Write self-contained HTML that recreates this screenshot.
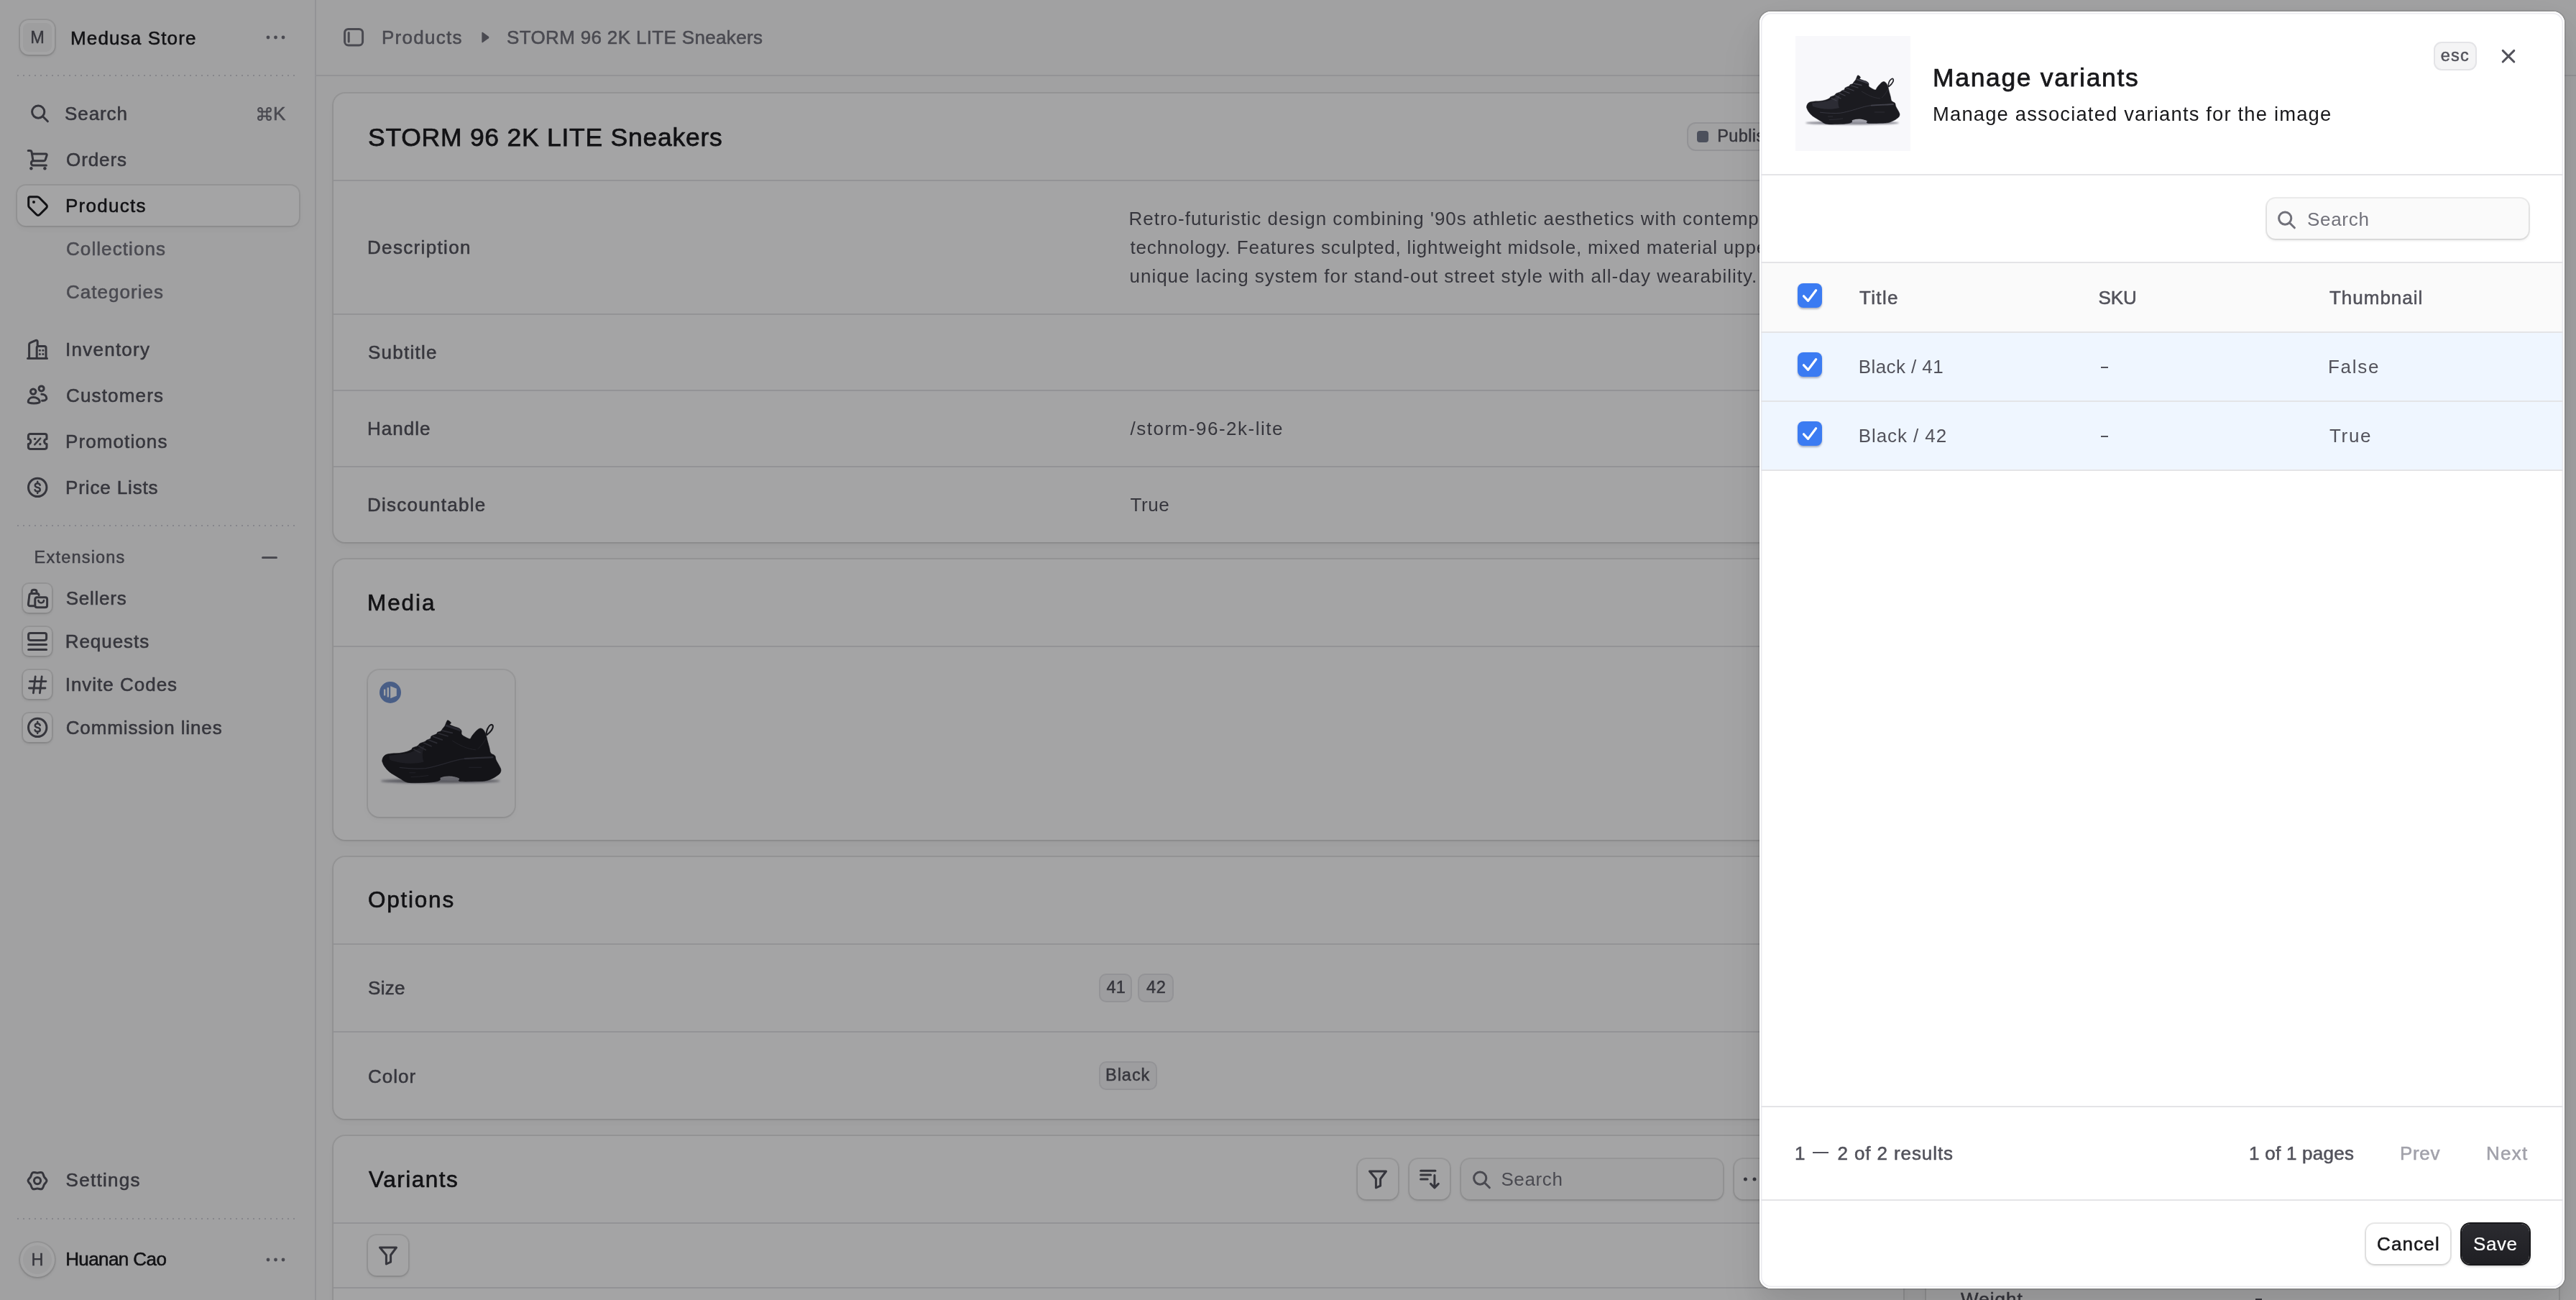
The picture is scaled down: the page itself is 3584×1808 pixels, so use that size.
<!DOCTYPE html>
<html><head><meta charset="utf-8"><title>Medusa Admin</title>
<style>
*{box-sizing:border-box;margin:0;padding:0}
html,body{width:3584px;height:1808px;overflow:hidden;background:#FAFAFA;font-family:"Liberation Sans",sans-serif}
#page{will-change:transform;position:absolute;left:0;top:0;width:3584px;height:1808px;overflow:hidden;background:#FAFAFA}
.t{position:absolute;white-space:pre;line-height:1;font-weight:400}
.abs{position:absolute}
.ic{position:absolute;overflow:visible;fill:none;stroke-linecap:round;stroke-linejoin:round}
.hl{position:absolute;height:2px;background:#E4E4E7}
.card{position:absolute;background:#fff;border-radius:16px;box-shadow:0 0 0 2px rgba(0,0,0,.08),0 2px 4px -2px rgba(0,0,0,.08),0 4px 8px 0 rgba(0,0,0,.04)}
.dots{position:absolute;height:2px;background:repeating-linear-gradient(90deg,#D0D0D6 0 2px,transparent 2px 8px)}
.xbox{position:absolute;width:40px;height:40px;border-radius:8px;background:#fff;box-shadow:0 0 0 2px rgba(0,0,0,.08),0 2px 4px rgba(0,0,0,.12)}
.btn{position:absolute;width:56px;height:56px;border-radius:12px;background:#fff;box-shadow:0 0 0 2px rgba(0,0,0,.08),0 2px 4px rgba(0,0,0,.12)}
.inp{position:absolute;height:56px;border-radius:12px;background:#FAFAFA;box-shadow:0 0 0 2px rgba(0,0,0,.08),0 2px 4px rgba(0,0,0,.12)}
.badge{position:absolute;height:40px;border-radius:10px;background:#F4F4F5;border:2px solid #E4E4E7}
#overlay{position:absolute;left:0;top:0;width:3584px;height:1808px;background:rgba(9,9,11,.37)}
#drawer{position:absolute;left:2448px;top:16px;width:1120px;height:1776px;background:#fff;border-radius:16px;border:2px solid #fff;
 box-shadow:0 0 0 2px rgba(0,0,0,.08),0 16px 32px rgba(0,0,0,.07),0 32px 64px rgba(0,0,0,.07);overflow:hidden}
#dt{will-change:transform;position:absolute;left:-2450px;top:-18px;width:3584px;height:1808px}
.cb{position:absolute;width:34px;height:34px;border-radius:8px;background:#3B7BF2;box-shadow:0 1.5px 2.5px rgba(20,30,70,.32)}
#dring{position:absolute;left:2448px;top:16px;width:1120px;height:1776px;border-radius:16px;box-shadow:inset 0 0 0 2px #fff,inset 0 0 0 3.5px rgba(228,228,235,.75);pointer-events:none}
</style></head>
<body>
<svg width="0" height="0" style="position:absolute">
 <defs>
  <filter id="blur1" x="-20%" y="-200%" width="140%" height="500%"><feGaussianBlur stdDeviation="1.1"/></filter>
  <symbol id="shoe" viewBox="0 0 160 160">
   <ellipse cx="79" cy="121" rx="65" ry="2.4" fill="#3a3a48" opacity=".6" filter="url(#blur1)"/>
   <path fill="#1b1b20" stroke="#1b1b20" stroke-width=".5" stroke-linejoin="round" d="M15.6,97.9 C15.8,96.8 16.1,95.7 16.9,94.6 C17.7,93.5 18.5,92.6 20.2,92.0 C21.9,91.4 23.7,91.3 26.2,91.0 C28.7,90.7 31.3,91.0 34.2,90.6 C37.1,90.2 39.7,89.7 42.1,89.0 C44.5,88.3 46.2,87.4 47.4,86.6 C48.6,85.8 47.6,85.4 48.8,84.7 C50.0,84.0 52.7,83.5 54.1,82.7 C55.5,81.9 55.3,80.8 56.7,80.0 C58.1,79.2 60.7,78.6 62.0,78.0 C63.3,77.4 62.9,77.0 64.0,76.4 C65.1,75.8 67.0,75.5 68.0,74.7 C69.0,73.9 68.1,72.9 69.3,72.0 C70.5,71.1 73.4,70.5 74.6,69.7 C75.8,68.9 75.2,68.2 76.0,67.7 C76.8,67.2 78.3,67.3 79.3,66.7 C80.3,66.1 80.5,65.2 81.3,64.1 C82.1,63.0 83.1,62.2 83.9,60.8 C84.7,59.4 85.3,57.2 85.9,56.1 C86.5,55.0 86.5,54.6 87.3,54.8 C88.1,55.0 90.2,56.6 90.6,57.4 C91.0,58.2 88.6,58.6 89.3,59.4 C90.0,60.2 92.8,61.1 94.6,61.8 C96.4,62.5 97.9,62.6 99.2,63.4 C100.5,64.2 101.4,64.9 101.9,66.1 C102.4,67.3 101.5,68.8 102.2,70.0 C102.9,71.2 104.4,71.9 105.8,72.7 C107.2,73.5 108.7,74.3 109.8,74.7 C110.9,75.1 111.1,75.3 111.8,74.7 C112.5,74.1 112.7,72.8 113.8,71.4 C114.9,70.0 116.4,68.1 117.8,66.7 C119.2,65.3 120.5,64.1 121.8,63.7 C123.1,63.3 124.0,63.6 125.1,64.4 C126.2,65.2 127.0,66.6 127.7,68.0 C128.4,69.4 128.6,70.3 129.1,72.0 C129.6,73.7 129.8,75.1 130.4,77.4 C131.0,79.7 131.8,82.3 132.4,84.7 C133.0,87.1 132.9,89.1 134.0,90.6 C135.1,92.1 137.4,92.0 138.4,93.3 C139.4,94.6 138.9,96.0 139.7,97.9 C140.5,99.8 142.0,102.0 143.0,103.9 C144.0,105.8 144.8,107.1 145.0,108.5 C145.2,109.9 144.9,110.8 144.3,111.9 C143.7,113.0 143.1,113.4 141.7,114.5 C140.3,115.6 138.7,116.7 136.4,117.8 C134.1,118.9 132.2,119.9 129.1,120.5 C126.0,121.1 124.2,121.1 119.1,121.2 C114.0,121.3 104.1,121.8 100.5,121.2 C96.9,120.6 101.3,118.8 99.2,117.8 C97.1,116.8 92.2,115.6 88.6,115.5 C85.0,115.4 81.1,116.4 79.3,117.2 C77.5,118.0 79.8,119.0 78.6,119.8 C77.4,120.6 76.2,121.3 72.7,121.8 C69.2,122.3 64.7,122.7 59.4,122.8 C54.1,122.9 47.7,123.3 43.4,122.5 C39.1,121.7 38.1,119.9 35.5,118.5 C32.9,117.1 31.1,115.9 28.8,114.5 C26.5,113.1 24.8,112.2 22.9,110.5 C21.0,108.8 19.5,107.0 18.2,105.2 C16.9,103.4 16.4,101.9 15.9,100.6 C15.4,99.3 15.4,99.0 15.6,97.9Z"/>
   <path fill="#9a9aa4" opacity=".9" d="M79.5,117.3 C84,115.7 94,115.7 99,117.9 L99.6,119.6 C93,120.6 85,120.6 79,119.9Z"/>
   <path fill="none" stroke="#26262c" stroke-width="1.7" stroke-linecap="round" d="M129.1,70 C129.3,66 131,61.2 133.8,59.7 C135.9,58.7 136.9,60.8 135.9,63.4 C134.8,66.2 132,68.8 129.6,70.6"/>
   <path fill="#33333b" d="M23,93.5 C30,92 40,91.6 46,90 C52,88 57,84 62,82 C60,87 58,93 61,100 C50,103 35,102 24,98Z" opacity=".75"/>
   <path fill="none" stroke="#3c3c46" stroke-width="2.2" stroke-linecap="round" d="M85.5,60.5 C90,62 96,63.6 100.5,65.6"/>
   <path fill="none" stroke="#41414b" stroke-width="1.3" stroke-linecap="round" d="M50,86.5 L57,90 M55.5,83 L63,87 M61,79.5 L69,83 M66,76 L75,79.5 M71,72.5 L81,76 M77,69 L87,72 M81,66 L92,68.5"/>
   <path fill="none" stroke="#3a3a44" stroke-width=".9" d="M34.2,106.2 C45,107.6 55,107.8 62.7,107.2 C75,105 85,101.5 92.6,99.3 C98,97.8 102,97 105.8,96.6"/>
   <path fill="none" stroke="#42424c" stroke-width="1.8" stroke-linecap="round" d="M105.8,96.6 C116,95.6 127,95.6 136,95"/>
   <path fill="none" stroke="#32323a" stroke-width=".8" d="M46.8,116.5 C54,116.4 60,115.8 66,114.9 M45,112 H52 M110,106 H124"/>
   <path fill="none" stroke="#34343c" stroke-width=".7" d="M92,77 C100,82 108,86 118,87 M120,86 C124,82 127,78 129,74"/>
  </symbol>
  <symbol id="dollar" viewBox="0 0 32 32">
   <circle cx="16.2" cy="15.9" r="12.7" stroke-width="3" fill="none"/>
   <path fill="none" stroke-width="2.5" d="M19.7,12.7 C19.2,11.1 17.9,10.2 16.2,10.2 C14.2,10.2 12.8,11.3 12.8,13 C12.8,14.6 14,15.4 16.2,15.9 C18.6,16.4 19.8,17.3 19.8,18.9 C19.8,20.5 18.3,21.6 16.2,21.6 C14.3,21.6 13,20.7 12.6,19.2 M16.2,7.8 V10.2 M16.2,21.6 V24"/>
  </symbol>
  <symbol id="funnel" viewBox="0 0 56 56">
   <path fill="none" stroke-width="3" d="M16.5,17 H39.5 L31.6,27.5 V37.2 L25.4,40 V27.5 Z"/>
  </symbol>
  <symbol id="mag" viewBox="0 0 32 32">
   <circle cx="14.2" cy="13.6" r="8.6" stroke-width="3" fill="none"/>
   <path stroke-width="3" d="M20.6,20 L27.4,26.8" fill="none"/>
  </symbol>
  <symbol id="check" viewBox="0 0 34 34">
   <path fill="none" stroke="#fff" stroke-width="3.2" stroke-linecap="round" stroke-linejoin="round" d="M8.5,17.8 L14.6,24.4 L25.6,9.8"/>
  </symbol>
 </defs>
</svg>

<div id="page">
<!-- ================= SIDEBAR ================= -->
<div class="abs" style="left:438px;top:0;width:2px;height:1808px;background:#E4E4E7"></div>
<!-- store avatar -->
<div class="abs" style="left:28px;top:28px;width:48px;height:48px;border-radius:12px;background:#fff;box-shadow:0 0 0 2px rgba(0,0,0,.08),0 2px 4px rgba(0,0,0,.12)"></div>
<div class="abs" style="left:32px;top:32px;width:40px;height:40px;border-radius:8px;background:#F5F5F6"></div>
<span class="t" style="left:42.2px;top:40.8px;font-size:23.5px;color:#52525B;-webkit-text-stroke:.4px #52525B">M</span>
<svg class="ic" style="left:366px;top:44px" width="36" height="16"><circle cx="7" cy="8" r="2.4" fill="#71717A"/><circle cx="17.5" cy="8" r="2.4" fill="#71717A"/><circle cx="28" cy="8" r="2.4" fill="#71717A"/></svg>
<div class="dots" style="left:24px;top:104px;width:392px"></div>
<!-- search -->
<svg class="ic" style="left:38.7px;top:142.1px" width="32" height="32" stroke="#52525B"><use href="#mag"/></svg>
<svg class="ic" style="left:358px;top:148.8px" width="20" height="19" viewBox="0 0 18 18" preserveAspectRatio="none" stroke="#71717A" stroke-width="2"><path d="M6,6 H12 V12 H6 Z M6,6 V4 A2.5,2.5 0 1 0 3.5,6 H6 M12,6 H14.5 A2.5,2.5 0 1 0 12,3.5 V6 M12,12 V14.5 A2.5,2.5 0 1 0 14.5,12 H12 M6,12 H3.5 A2.5,2.5 0 1 0 6,14.5 V12"/></svg>
<!-- orders cart -->
<svg class="ic" style="left:36px;top:206px" width="32" height="32" stroke="#52525B" stroke-width="3"><path d="M3.2,3.6 H5.6 C6.9,3.6 7.9,4.4 8.1,5.7 L10,17.6"/><path d="M8.8,8 H27.6 C28.8,8 29.5,9 29.1,10.1 L27,16.4 C26.7,17.3 26,17.7 25,17.7 H10.2 C6.6,17.7 6.4,24 10.2,24 H28.4"/><circle cx="7.4" cy="28.3" r="2.2" fill="#52525B" stroke="none"/><circle cx="26.4" cy="28.3" r="2.2" fill="#52525B" stroke="none"/></svg>
<!-- products active -->
<div class="abs" style="left:24px;top:258px;width:392px;height:56px;border-radius:12px;background:#fff;box-shadow:0 0 0 2px rgba(0,0,0,.08),0 2px 4px -2px rgba(0,0,0,.08),0 4px 8px rgba(0,0,0,.04)"></div>
<svg class="ic" style="left:36px;top:270px" width="32" height="32" stroke="#18181B" stroke-width="3"><path d="M5.8,3.7 H15.8 C16.9,3.7 17.8,4.1 18.5,4.8 L28.3,14.6 C29.8,16.1 29.8,17.9 28.3,19.4 L19.4,28.3 C17.9,29.8 16.1,29.8 14.6,28.3 L4.8,18.5 C4.1,17.8 3.7,16.9 3.7,15.8 V5.8 C3.7,4.6 4.6,3.7 5.8,3.7 Z"/><circle cx="11" cy="11" r="2" fill="#18181B" stroke="none"/></svg>
<!-- inventory -->
<svg class="ic" style="left:36px;top:470px" width="32" height="32" stroke="#52525B" stroke-width="3"><path d="M2.5,28.6 H29.5"/><path d="M4.6,28 V9 C4.6,7.8 5.2,7 6.3,6.6 L13.8,3.4 C15,2.9 16.2,3.6 16.2,4.9 V10.2"/><path d="M15.2,28 V13.6 C15.2,12.3 16.1,11.4 17.4,11.4 H25.8 C27.1,11.4 28,12.3 28,13.6 V28"/><g fill="#52525B" stroke="none"><circle cx="19.4" cy="17.2" r="1.5"/><circle cx="23.9" cy="17.2" r="1.5"/><circle cx="19.4" cy="22.6" r="1.5"/><circle cx="23.9" cy="22.6" r="1.5"/></g></svg>
<!-- customers -->
<svg class="ic" style="left:36px;top:534px" width="32" height="32" stroke="#52525B" stroke-width="3"><circle cx="10.2" cy="10.6" r="3.7"/><path d="M3.2,25 C3.2,21 6.4,18.6 10.4,18.6 C14.4,18.6 19.2,21 19.2,25 C19.2,27.6 3.2,27.6 3.2,25 Z"/><circle cx="21.6" cy="6.4" r="3.5"/><path d="M21.8,14.2 C26,14.2 28.8,16.8 28.8,20.2 C28.8,22.4 25.6,23.6 22.6,23.2"/></svg>
<!-- promotions -->
<svg class="ic" style="left:36px;top:598px" width="32" height="32" stroke="#52525B" stroke-width="3"><path d="M6,5.6 H26.4 C28,5.6 29,6.6 29,8.2 V12.4 C27,12.4 25.6,14 25.6,16 C25.6,18 27,19.6 29,19.6 V23.8 C29,25.4 28,26.4 26.4,26.4 H6 C4.4,26.4 3.4,25.4 3.4,23.8 V19.6 C5.4,19.6 6.8,18 6.8,16 C6.8,14 5.4,12.4 3.4,12.4 V8.2 C3.4,6.6 4.4,5.6 6,5.6 Z"/><path d="M20.2,11.6 L12.2,20.4" stroke-width="2.6"/><circle cx="12.6" cy="12.4" r="1.7" fill="#52525B" stroke="none"/><circle cx="19.8" cy="19.8" r="1.7" fill="#52525B" stroke="none"/></svg>
<!-- price lists -->
<svg class="ic" style="left:36px;top:662px" width="32" height="32" stroke="#52525B"><use href="#dollar"/></svg>
<div class="dots" style="left:24px;top:730px;width:392px"></div>
<!-- extensions -->
<div class="abs" style="left:363.5px;top:774.3px;width:22.5px;height:3px;border-radius:2px;background:#71717A"></div>
<div class="xbox" style="left:32px;top:812px"></div>
<svg class="ic" style="left:36px;top:816px" width="32" height="32" stroke="#52525B" stroke-width="3"><path d="M11,26.8 H5.8 C4.2,26.8 3.2,25.6 3.4,24 L4.9,11.6 C5.1,10.2 6,9.4 7.4,9.4 H15.6 C17,9.4 17.9,10.2 18.1,11.6"/><path d="M8,9.2 V7 C8,3.4 15,3.4 15,7 V9.2"/><path d="M15.6,14.8 H26.8 C28.6,14.8 29.6,15.8 29.6,17.6 V26 C29.6,27.8 28.6,28.8 26.8,28.8 H15.6 C13.8,28.8 12.8,27.8 12.8,26 V17.6 C12.8,15.8 13.8,14.8 15.6,14.8 Z"/><path d="M17.4,19 C17.4,23.6 25,23.6 25,19" stroke-width="2.6"/></svg>
<div class="xbox" style="left:32px;top:872px"></div>
<svg class="ic" style="left:36px;top:876px" width="32" height="32" stroke="#52525B" stroke-width="3"><path d="M6.2,4.6 H26 C27.6,4.6 28.6,5.6 28.6,7.2 V11.8 C28.6,13.4 27.6,14.4 26,14.4 H6.2 C4.6,14.4 3.6,13.4 3.6,11.8 V7.2 C3.6,5.6 4.6,4.6 6.2,4.6 Z"/><path d="M3.6,20.4 H28.6 M3.6,27.4 H28.6"/></svg>
<div class="xbox" style="left:32px;top:932px"></div>
<svg class="ic" style="left:36px;top:936px" width="32" height="32" stroke="#52525B" stroke-width="2.8"><path d="M13.2,4.8 L10.4,27.8 M22.2,4.8 L19.4,27.8 M5.4,11.6 H28 M4.4,21 H27"/></svg>
<div class="xbox" style="left:32px;top:992px"></div>
<svg class="ic" style="left:36px;top:996px" width="32" height="32" stroke="#52525B"><use href="#dollar"/></svg>
<!-- settings -->
<svg class="ic" style="left:36px;top:1626px" width="32" height="32" stroke="#52525B" stroke-width="3"><path d="M29.00,16.10 C29.00,18.28 26.74,19.30 25.44,21.55 C24.14,23.80 24.39,26.27 22.50,27.36 C20.61,28.45 18.60,27.00 16.00,27.00 C13.40,27.00 11.39,28.45 9.50,27.36 C7.61,26.27 7.86,23.80 6.56,21.55 C5.26,19.30 3.00,18.28 3.00,16.10 C3.00,13.92 5.26,12.90 6.56,10.65 C7.86,8.40 7.61,5.93 9.50,4.84 C11.39,3.75 13.40,5.20 16.00,5.20 C18.60,5.20 20.61,3.75 22.50,4.84 C24.39,5.93 24.14,8.40 25.44,10.65 C26.74,12.90 29.00,13.92 29.00,16.10Z"/><circle cx="16" cy="16.1" r="4.6"/></svg>
<div class="dots" style="left:24px;top:1694px;width:392px"></div>
<!-- user -->
<div class="abs" style="left:28px;top:1728px;width:48px;height:48px;border-radius:24px;background:#fff;box-shadow:0 0 0 2px rgba(0,0,0,.08),0 2px 4px rgba(0,0,0,.12)"></div>
<div class="abs" style="left:32px;top:1732px;width:40px;height:40px;border-radius:20px;background:#F5F5F6"></div>
<span class="t" style="left:43.6px;top:1741.4px;font-size:23.5px;color:#52525B;-webkit-text-stroke:.4px #52525B">H</span>
<svg class="ic" style="left:366px;top:1744px" width="36" height="16"><circle cx="7" cy="8" r="2.4" fill="#71717A"/><circle cx="17.5" cy="8" r="2.4" fill="#71717A"/><circle cx="28" cy="8" r="2.4" fill="#71717A"/></svg>

<!-- ================= TOPBAR ================= -->
<div class="hl" style="left:440px;top:104px;width:3144px"></div>
<svg class="ic" style="left:476px;top:36px" width="32" height="32" stroke="#71717A" stroke-width="3"><rect x="3.6" y="4.4" width="25" height="22.6" rx="5"/><path d="M9.2,9.6 V22"/></svg>
<svg class="ic" style="left:668px;top:43px" width="16" height="18"><path d="M2.4,2.6 C2.4,1.8 3.2,1.4 3.9,1.9 L11.8,7.8 C12.6,8.4 12.6,9.6 11.8,10.2 L3.9,16.1 C3.2,16.6 2.4,16.2 2.4,15.4 Z" fill="#71717A"/></svg>
<!-- ================= GENERAL CARD ================= -->
<div class="card" style="left:464px;top:130px;width:2184px;height:624px"></div>
<div class="hl" style="left:464px;top:250px;width:2184px"></div>
<div class="hl" style="left:464px;top:436px;width:2184px"></div>
<div class="hl" style="left:464px;top:542px;width:2184px"></div>
<div class="hl" style="left:464px;top:648px;width:2184px"></div>
<!-- published badge -->
<div class="abs" style="left:2347px;top:170px;width:170px;height:40px;border-radius:12px;background:#FAFAFA;border:2px solid #E4E4E7"></div>
<div class="abs" style="left:2361px;top:182px;width:16px;height:16px;border-radius:4px;background:#747A8C"></div>
<div class="btn" style="left:2544px;top:162px;background:transparent;box-shadow:none"></div>
<!-- ================= MEDIA CARD ================= -->
<div class="card" style="left:464px;top:778px;width:2184px;height:390px"></div>
<div class="hl" style="left:464px;top:898px;width:2184px"></div>
<div class="abs" style="left:512px;top:932px;width:204px;height:204px;border-radius:16px;background:#FDFDFE;box-shadow:0 0 0 2px rgba(0,0,0,.08),0 2px 4px -2px rgba(0,0,0,.08),0 4px 8px rgba(0,0,0,.04);overflow:hidden">
 <svg class="abs" style="left:0;top:0" width="204" height="204"><use href="#shoe"/></svg>
</div>
<svg class="ic" style="left:528px;top:948px" width="30" height="30"><circle cx="15" cy="15" r="15" fill="#6F90CF"/><path d="M15.2,6.2 L23.8,9.7 V19.8 L15.2,23.3 Z" fill="#fff"/><rect x="10.6" y="8.3" width="2.5" height="13.2" fill="#fff"/><rect x="6" y="10.6" width="2.3" height="8.8" fill="#fff"/></svg>
<!-- ================= OPTIONS CARD ================= -->
<div class="card" style="left:464px;top:1192px;width:2184px;height:364px"></div>
<div class="hl" style="left:464px;top:1312px;width:2184px"></div>
<div class="hl" style="left:464px;top:1434px;width:2184px"></div>
<div class="badge" style="left:1528.6px;top:1354px;width:46px"></div>
<div class="badge" style="left:1583.4px;top:1354px;width:49.4px"></div>
<div class="badge" style="left:1528.6px;top:1476px;width:81px"></div>
<!-- ================= VARIANTS CARD ================= -->
<div class="card" style="left:464px;top:1580px;width:2184px;height:400px"></div>
<div class="hl" style="left:464px;top:1700px;width:2184px"></div>
<div class="hl" style="left:464px;top:1790px;width:2184px"></div>
<div class="btn" style="left:1889px;top:1612px"></div>
<svg class="ic" style="left:1889px;top:1612px" width="56" height="56" stroke="#52525B"><use href="#funnel"/></svg>
<div class="btn" style="left:1961px;top:1612px"></div>
<svg class="ic" style="left:1961px;top:1612px" width="56" height="56" stroke="#52525B" stroke-width="3"><path d="M15.6,16.2 H36 M15.6,22.1 H29.6 M15.6,28 H25.2 M34.9,22.4 V39.4 M29.5,34.4 L34.9,39.9 L40.3,34.4"/></svg>
<div class="inp" style="left:2033px;top:1612px;width:364px"></div>
<svg class="ic" style="left:2045px;top:1625.4px" width="32" height="32" stroke="#71717A"><use href="#mag"/></svg>
<div class="btn" style="left:2413px;top:1612px"></div>
<svg class="ic" style="left:2421px;top:1632px" width="40" height="16"><circle cx="7.4" cy="8" r="2.5" fill="#52525B"/><circle cx="20" cy="8" r="2.5" fill="#52525B"/><circle cx="32.6" cy="8" r="2.5" fill="#52525B"/></svg>
<div class="btn" style="left:512px;top:1718px"></div>
<svg class="ic" style="left:512px;top:1718px" width="56" height="56" stroke="#52525B"><use href="#funnel"/></svg>
<!-- ================= SIDE COLUMN (mostly hidden) ================= -->
<div class="card" style="left:2680px;top:130px;width:880px;height:520px"></div>
<div class="card" style="left:2680px;top:674px;width:880px;height:420px"></div>
<div class="card" style="left:2680px;top:1118px;width:880px;height:760px"></div>
<div class="hl" style="left:2680px;top:1778px;width:880px"></div>
<div class="abs" style="left:3138px;top:1806px;width:9px;height:3px;background:#52525B"></div>

<span class="t" style="left:98.0px;top:39.5px;font-size:26px;letter-spacing:1.145px;color:#18181B;-webkit-text-stroke:0.55px #18181B;">Medusa Store</span>
<span class="t" style="left:90.0px;top:145.0px;font-size:26px;letter-spacing:0.916px;color:#52525B;-webkit-text-stroke:0.55px #52525B;">Search</span>
<span class="t" style="left:380.0px;top:145.0px;font-size:26px;letter-spacing:0.000px;color:#71717A;-webkit-text-stroke:0.55px #71717A;">K</span>
<span class="t" style="left:92.0px;top:209.0px;font-size:26px;letter-spacing:0.908px;color:#52525B;-webkit-text-stroke:0.55px #52525B;">Orders</span>
<span class="t" style="left:91.0px;top:272.7px;font-size:26px;letter-spacing:1.271px;color:#18181B;-webkit-text-stroke:0.55px #18181B;">Products</span>
<span class="t" style="left:92.0px;top:332.5px;font-size:26px;letter-spacing:1.083px;color:#71717A;-webkit-text-stroke:0.55px #71717A;">Collections</span>
<span class="t" style="left:92.0px;top:392.5px;font-size:26px;letter-spacing:1.030px;color:#71717A;-webkit-text-stroke:0.55px #71717A;">Categories</span>
<span class="t" style="left:91.0px;top:473.0px;font-size:26px;letter-spacing:1.257px;color:#52525B;-webkit-text-stroke:0.55px #52525B;">Inventory</span>
<span class="t" style="left:92.0px;top:537.0px;font-size:26px;letter-spacing:1.163px;color:#52525B;-webkit-text-stroke:0.55px #52525B;">Customers</span>
<span class="t" style="left:91.0px;top:601.0px;font-size:26px;letter-spacing:1.100px;color:#52525B;-webkit-text-stroke:0.55px #52525B;">Promotions</span>
<span class="t" style="left:91.0px;top:665.0px;font-size:26px;letter-spacing:0.868px;color:#52525B;-webkit-text-stroke:0.55px #52525B;">Price Lists</span>
<span class="t" style="left:47.6px;top:764.1px;font-size:23.5px;letter-spacing:1.200px;color:#5E5E68;-webkit-text-stroke:0.49px #5E5E68;">Extensions</span>
<span class="t" style="left:91.7px;top:819.0px;font-size:26px;letter-spacing:0.755px;color:#52525B;-webkit-text-stroke:0.55px #52525B;">Sellers</span>
<span class="t" style="left:90.7px;top:879.0px;font-size:26px;letter-spacing:0.951px;color:#52525B;-webkit-text-stroke:0.55px #52525B;">Requests</span>
<span class="t" style="left:90.7px;top:939.0px;font-size:26px;letter-spacing:0.989px;color:#52525B;-webkit-text-stroke:0.55px #52525B;">Invite Codes</span>
<span class="t" style="left:91.7px;top:999.0px;font-size:26px;letter-spacing:0.885px;color:#52525B;-webkit-text-stroke:0.55px #52525B;">Commission lines</span>
<span class="t" style="left:91.6px;top:1628.3px;font-size:26px;letter-spacing:1.294px;color:#52525B;-webkit-text-stroke:0.55px #52525B;">Settings</span>
<span class="t" style="left:91.2px;top:1738.0px;font-size:26px;letter-spacing:-0.593px;color:#18181B;-webkit-text-stroke:0.55px #18181B;">Huanan Cao</span>
<span class="t" style="left:531.0px;top:38.5px;font-size:26px;letter-spacing:1.271px;color:#71717A;-webkit-text-stroke:0.55px #71717A;">Products</span>
<span class="t" style="left:705.0px;top:38.5px;font-size:26px;letter-spacing:0.343px;color:#71717A;-webkit-text-stroke:0.55px #71717A;">STORM 96 2K LITE Sneakers</span>
<span class="t" style="left:512.0px;top:173.7px;font-size:35.5px;letter-spacing:0.746px;color:#18181B;-webkit-text-stroke:0.75px #18181B;">STORM 96 2K LITE Sneakers</span>
<span class="t" style="left:2389.2px;top:177.9px;font-size:23.5px;letter-spacing:0.400px;color:#52525B;-webkit-text-stroke:0.49px #52525B;">Published</span>
<span class="t" style="left:511.0px;top:330.5px;font-size:26px;letter-spacing:1.341px;color:#52525B;-webkit-text-stroke:0.55px #52525B;">Description</span>
<span class="t" style="left:1571.5px;top:370.5px;font-size:26px;letter-spacing:0.989px;color:#52525B;">unique lacing system for stand-out street style with all-day wearability.</span>
<span class="t" style="left:512.0px;top:477.0px;font-size:26px;letter-spacing:1.248px;color:#52525B;-webkit-text-stroke:0.55px #52525B;">Subtitle</span>
<span class="t" style="left:511.0px;top:583.0px;font-size:26px;letter-spacing:1.013px;color:#52525B;-webkit-text-stroke:0.55px #52525B;">Handle</span>
<span class="t" style="left:511.0px;top:689.0px;font-size:26px;letter-spacing:1.268px;color:#52525B;-webkit-text-stroke:0.55px #52525B;">Discountable</span>
<span class="t" style="left:1572.5px;top:582.5px;font-size:26px;letter-spacing:1.509px;color:#52525B;">/storm-96-2k-lite</span>
<span class="t" style="left:1572.5px;top:688.5px;font-size:26px;letter-spacing:0.555px;color:#52525B;">True</span>
<span class="t" style="left:511.0px;top:822.8px;font-size:31.5px;letter-spacing:1.931px;color:#18181B;-webkit-text-stroke:0.66px #18181B;">Media</span>
<span class="t" style="left:512.0px;top:1235.6px;font-size:31.5px;letter-spacing:1.765px;color:#18181B;-webkit-text-stroke:0.66px #18181B;">Options</span>
<span class="t" style="left:512.0px;top:1361.0px;font-size:26px;letter-spacing:0.294px;color:#52525B;-webkit-text-stroke:0.55px #52525B;">Size</span>
<span class="t" style="left:512.0px;top:1483.8px;font-size:26px;letter-spacing:1.007px;color:#52525B;-webkit-text-stroke:0.55px #52525B;">Color</span>
<span class="t" style="left:1539.6px;top:1361.5px;font-size:23.5px;letter-spacing:0.200px;color:#52525B;-webkit-text-stroke:0.49px #52525B;">41</span>
<span class="t" style="left:1595.0px;top:1361.5px;font-size:23.5px;letter-spacing:0.600px;color:#52525B;-webkit-text-stroke:0.49px #52525B;">42</span>
<span class="t" style="left:1538.0px;top:1483.7px;font-size:23.5px;letter-spacing:0.971px;color:#52525B;-webkit-text-stroke:0.49px #52525B;">Black</span>
<span class="t" style="left:513.0px;top:1624.6px;font-size:31.5px;letter-spacing:1.504px;color:#18181B;-webkit-text-stroke:0.66px #18181B;">Variants</span>
<span class="t" style="left:2088.4px;top:1626.7px;font-size:26px;letter-spacing:0.616px;color:#71717A;">Search</span>
<span class="t" style="left:2728.0px;top:1794.0px;font-size:26px;letter-spacing:1.055px;color:#52525B;-webkit-text-stroke:0.55px #52525B;">Weight</span>
<span class="t" style="left:1570.5px;top:290.5px;font-size:26px;letter-spacing:0.989px;color:#52525B;">Retro-futuristic design combining &#x27;90s athletic aesthetics with contemporary</span>
<span class="t" style="left:1572.5px;top:330.5px;font-size:26px;letter-spacing:0.829px;color:#52525B;">technology. Features sculpted, lightweight midsole, mixed material upper, and</span>
</div>
<div id="overlay"></div>
<div id="drawer"><div id="dt">
<!-- header -->
<div class="abs" style="left:2498px;top:50px;width:160px;height:160px;background:#F8F8FB;overflow:hidden"><svg class="abs" style="left:0;top:0" width="160" height="160"><use href="#shoe"/></svg></div>
<div class="abs" style="left:3386px;top:58px;width:60px;height:40px;border-radius:11px;background:#F4F4F5;border:2px solid #E4E4E7"></div>
<svg class="ic" style="left:3474px;top:62px" width="32" height="32" stroke="#52525B" stroke-width="3"><path d="M8.2,8.4 L23.8,24 M23.8,8.4 L8.2,24"/></svg>
<div class="hl" style="left:2450px;top:242px;width:1116px"></div>
<!-- search row -->
<div class="inp" style="left:3154px;top:276px;width:364px"></div>
<svg class="ic" style="left:3165.2px;top:290px" width="32" height="32" stroke="#71717A"><use href="#mag"/></svg>
<!-- table -->
<div class="abs" style="left:2450px;top:364px;width:1116px;height:98px;background:#FAFAFA"></div>
<div class="abs" style="left:2450px;top:462px;width:1116px;height:192px;background:#EFF6FF"></div>
<div class="hl" style="left:2450px;top:364px;width:1116px"></div>
<div class="hl" style="left:2450px;top:461px;width:1116px"></div>
<div class="hl" style="left:2450px;top:557px;width:1116px"></div>
<div class="hl" style="left:2450px;top:653px;width:1116px"></div>
<div class="cb" style="left:2501px;top:394px"></div><svg class="ic" style="left:2501px;top:394px" width="34" height="34"><use href="#check"/></svg>
<div class="cb" style="left:2501px;top:490px"></div><svg class="ic" style="left:2501px;top:490px" width="34" height="34"><use href="#check"/></svg>
<div class="cb" style="left:2501px;top:586px"></div><svg class="ic" style="left:2501px;top:586px" width="34" height="34"><use href="#check"/></svg>
<div class="abs" style="left:2922.5px;top:510px;width:10.5px;height:2.4px;background:#52525B"></div>
<div class="abs" style="left:2922.5px;top:606px;width:10.5px;height:2.4px;background:#52525B"></div>
<!-- pagination -->
<div class="hl" style="left:2450px;top:1538px;width:1116px"></div>
<div class="abs" style="left:2521.7px;top:1601.8px;width:22.8px;height:2.6px;background:#52525B"></div>
<div class="hl" style="left:2450px;top:1668px;width:1116px"></div>
<!-- footer -->
<div class="abs" style="left:3292px;top:1702px;width:117px;height:56px;border-radius:12px;background:#fff;box-shadow:0 0 0 2px rgba(0,0,0,.09),0 2px 4px rgba(0,0,0,.12)"></div>
<div class="abs" style="left:3424.5px;top:1702px;width:94px;height:56px;border-radius:12px;background:linear-gradient(180deg,#2B2B30,#1F1F23);box-shadow:0 0 0 2px #18181B,0 2px 4px rgba(0,0,0,.4)"></div>
<span class="t" style="left:2689.0px;top:91.2px;font-size:35.5px;letter-spacing:1.664px;color:#18181B;-webkit-text-stroke:0.75px #18181B;">Manage variants</span>
<span class="t" style="left:2689.0px;top:145.1px;font-size:27.4px;letter-spacing:1.172px;color:#18181B;">Manage associated variants for the image</span>
<span class="t" style="left:3395.7px;top:65.7px;font-size:23.5px;letter-spacing:1.240px;color:#52525B;-webkit-text-stroke:0.49px #52525B;">esc</span>
<span class="t" style="left:3210.0px;top:292.0px;font-size:26px;letter-spacing:0.696px;color:#71717A;">Search</span>
<span class="t" style="left:2587.0px;top:400.5px;font-size:26px;letter-spacing:1.327px;color:#52525B;-webkit-text-stroke:0.55px #52525B;">Title</span>
<span class="t" style="left:2919.5px;top:400.5px;font-size:26px;letter-spacing:-0.092px;color:#52525B;-webkit-text-stroke:0.55px #52525B;">SKU</span>
<span class="t" style="left:3241.0px;top:400.5px;font-size:26px;letter-spacing:0.985px;color:#52525B;-webkit-text-stroke:0.55px #52525B;">Thumbnail</span>
<span class="t" style="left:2585.8px;top:496.7px;font-size:26px;letter-spacing:0.410px;color:#52525B;">Black / 41</span>
<span class="t" style="left:2585.8px;top:593.0px;font-size:26px;letter-spacing:0.910px;color:#52525B;">Black / 42</span>
<span class="t" style="left:3239.0px;top:496.7px;font-size:26px;letter-spacing:1.720px;color:#52525B;">False</span>
<span class="t" style="left:3241.0px;top:593.0px;font-size:26px;letter-spacing:1.655px;color:#52525B;">True</span>
<span class="t" style="left:2497.0px;top:1591.0px;font-size:26px;letter-spacing:0.000px;color:#52525B;-webkit-text-stroke:0.55px #52525B;">1</span>
<span class="t" style="left:2556.5px;top:1591.0px;font-size:26px;letter-spacing:0.896px;color:#52525B;-webkit-text-stroke:0.55px #52525B;">2 of 2 results</span>
<span class="t" style="left:3129.0px;top:1591.0px;font-size:26px;letter-spacing:0.262px;color:#52525B;-webkit-text-stroke:0.55px #52525B;">1 of 1 pages</span>
<span class="t" style="left:3339.0px;top:1591.0px;font-size:26px;letter-spacing:0.680px;color:#A1A1AA;-webkit-text-stroke:0.55px #A1A1AA;">Prev</span>
<span class="t" style="left:3459.0px;top:1591.0px;font-size:26px;letter-spacing:1.255px;color:#A1A1AA;-webkit-text-stroke:0.55px #A1A1AA;">Next</span>
<span class="t" style="left:3307.0px;top:1716.7px;font-size:26px;letter-spacing:1.169px;color:#18181B;-webkit-text-stroke:0.55px #18181B;">Cancel</span>
<span class="t" style="left:3441.0px;top:1716.7px;font-size:26px;letter-spacing:0.566px;color:#FFFFFF;-webkit-text-stroke:0.20px #FFFFFF;">Save</span>
</div></div>

<div id="dring"></div>
</body></html>
